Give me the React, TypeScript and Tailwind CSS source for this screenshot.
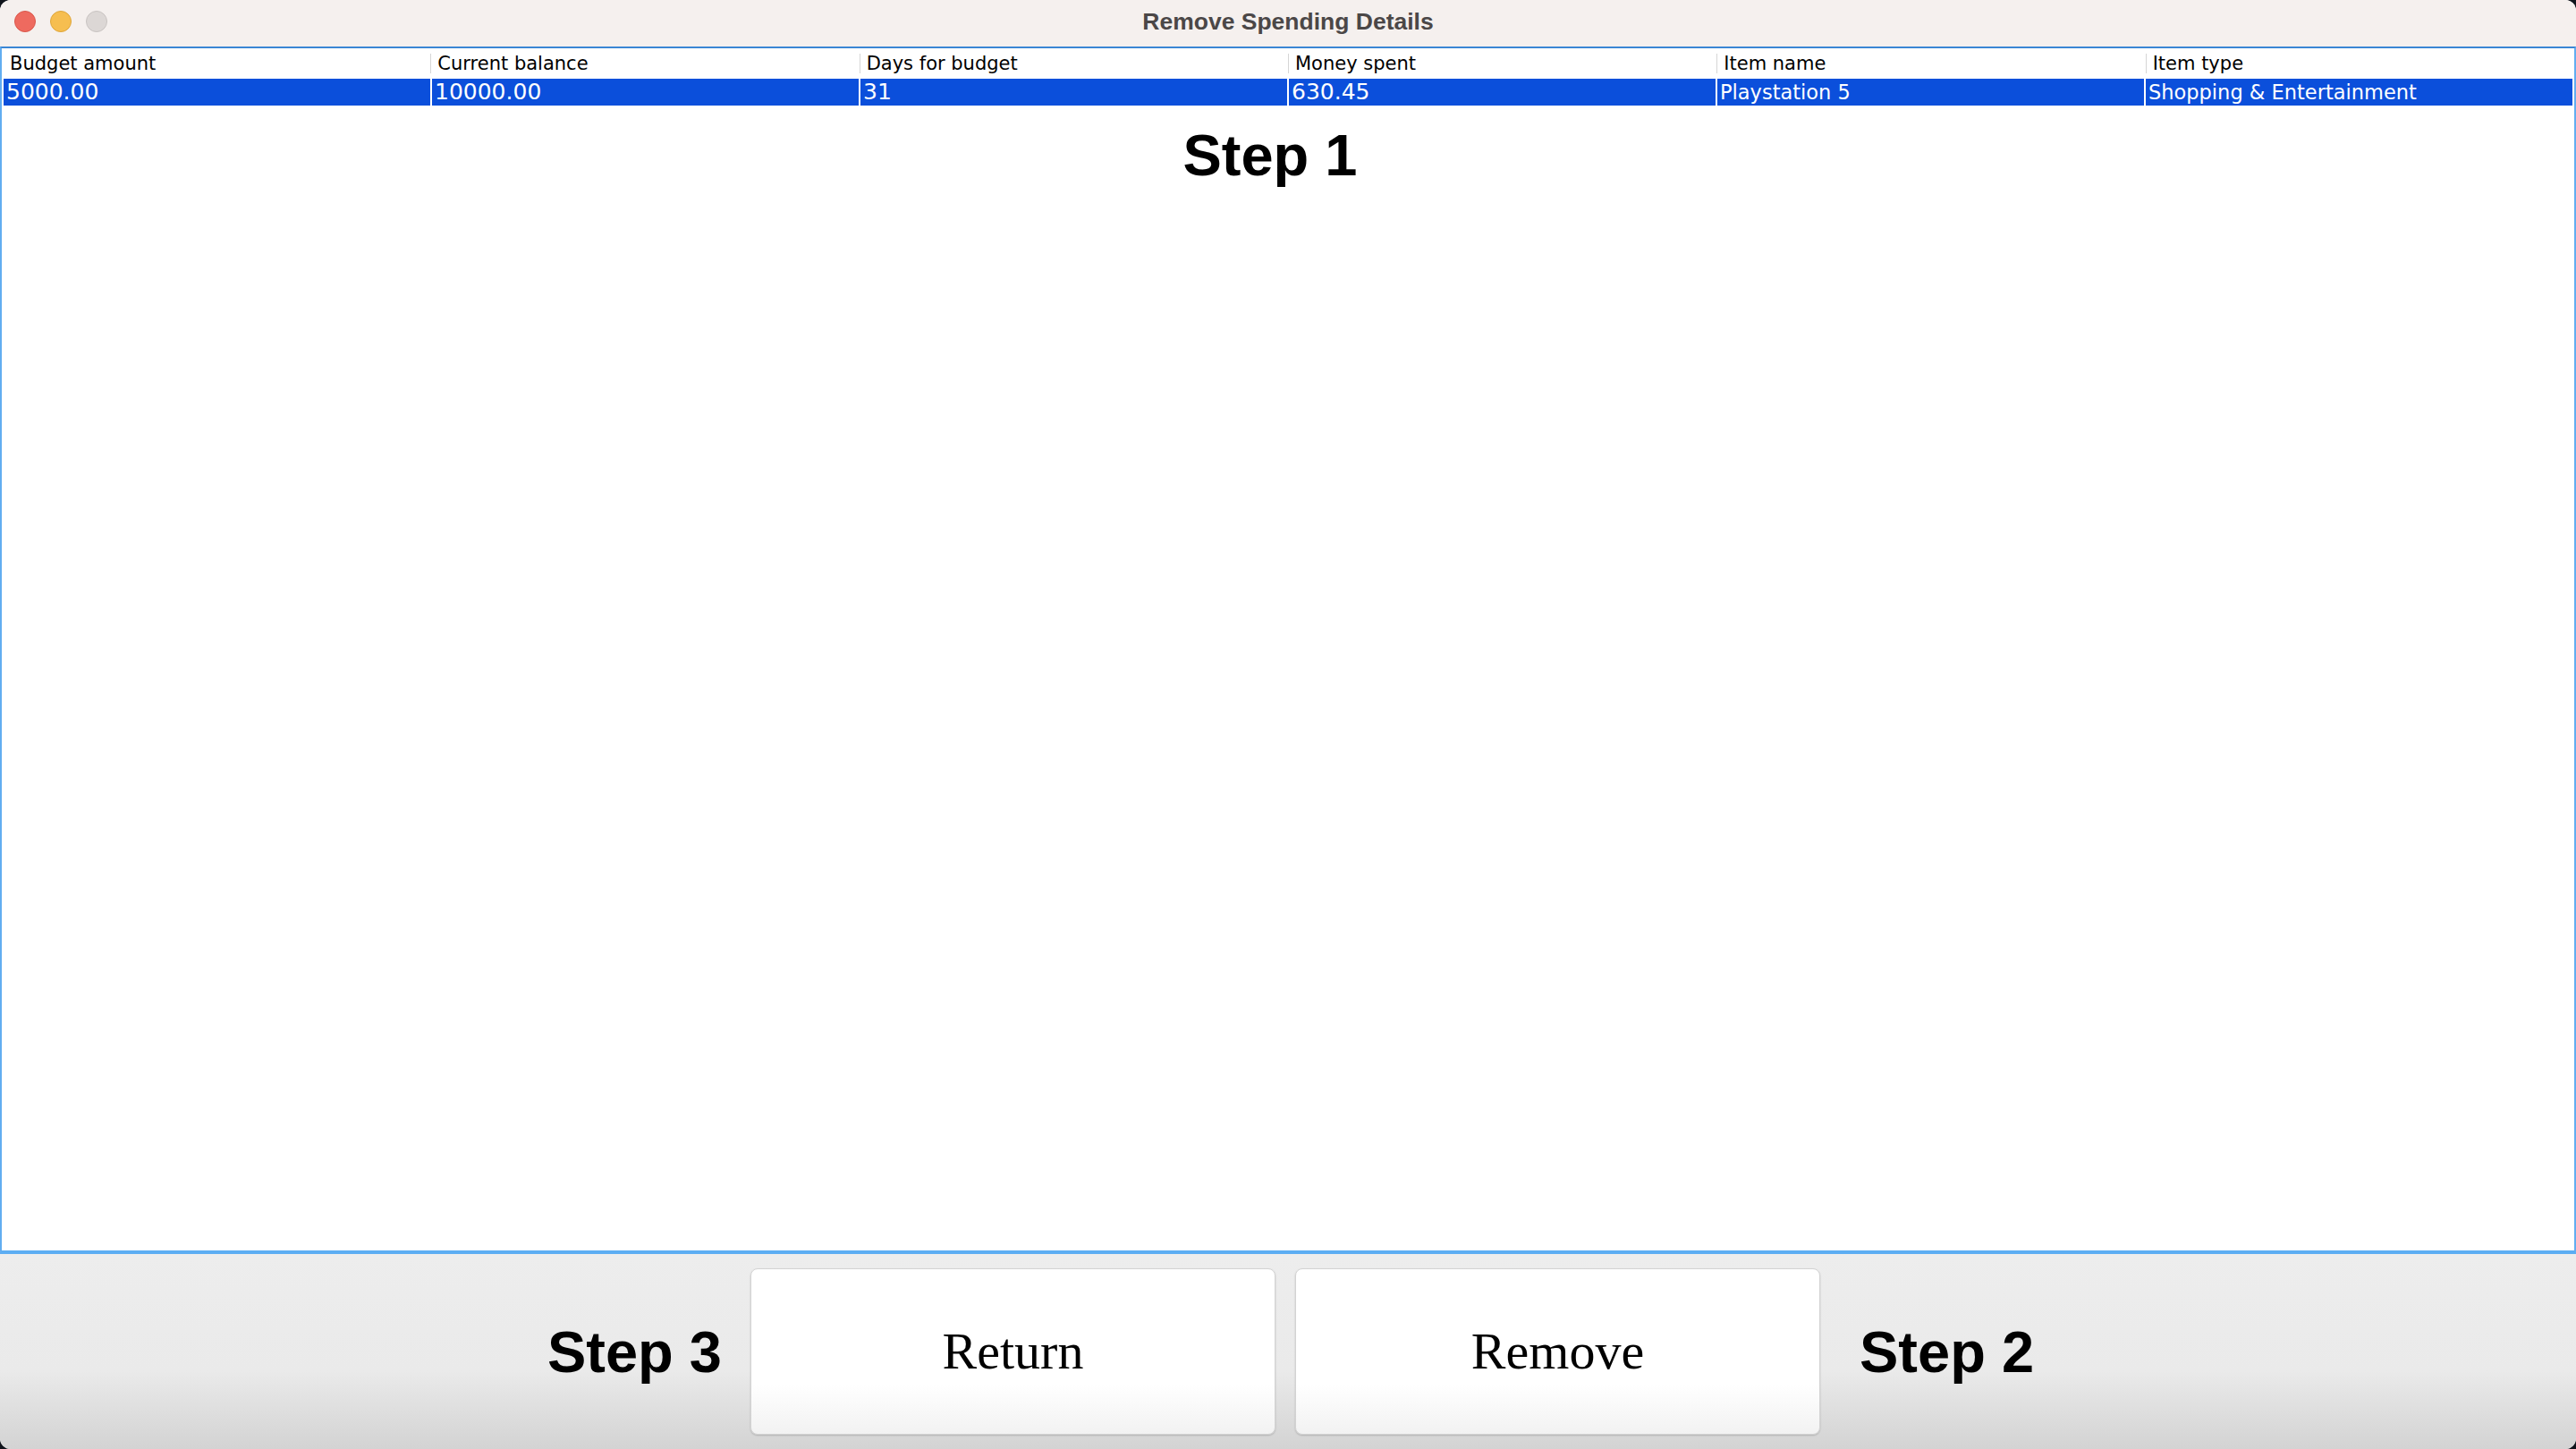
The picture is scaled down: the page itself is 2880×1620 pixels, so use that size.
import React from "react";

const columns = [
  "Budget amount",
  "Current balance",
  "Days for budget",
  "Money spent",
  "Item name",
  "Item type",
];

const rows = [
  ["5000.00", "10000.00", "31", "630.45", "Playstation 5", "Shopping & Entertainment"],
];

function TrafficLights() {
  return (
    <div className="flex items-center gap-[16px] pl-[16px]">
      <span className="w-[24px] h-[24px] rounded-full bg-[#ee6a5f] border border-[#d9574c]" />
      <span className="w-[24px] h-[24px] rounded-full bg-[#f6be50] border border-[#dea53a]" />
      <span className="w-[24px] h-[24px] rounded-full bg-[#dcd7d5] border border-[#c8c3c1]" />
    </div>
  );
}

function StepLabel({ children, className = "" }: { children: React.ReactNode; className?: string }) {
  return (
    <div
      className={`text-[65px] leading-none font-bold text-black whitespace-nowrap ${className}`}
      style={{ fontFamily: '"Liberation Sans", Arial, sans-serif' }}
    >
      {children}
    </div>
  );
}

function ActionButton({ label }: { label: string }) {
  return (
    <button
      className="w-[587px] h-[186px] rounded-[8px] border border-[#d3d3d3] bg-linear-to-b from-white via-white via-70% to-[#f2f2f2] shadow-[0_1px_2px_rgba(0,0,0,0.18)] flex items-center justify-center text-[58px] leading-none text-black"
      style={{ fontFamily: '"Liberation Serif", "Times New Roman", serif' }}
    >
      {label}
    </button>
  );
}

const isNumber = (v: string) => /^[\d.]+$/.test(v);

export default function App() {
  return (
    <div className="w-[2880px] h-[1620px] bg-[#10141c]">
      <div className="w-full h-full rounded-[12px] overflow-hidden flex flex-col bg-white">
        {/* Title bar */}
        <div className="h-[52px] shrink-0 bg-[#f5f0ee] grid grid-cols-[1fr_auto_1fr] items-center pb-[4px]">
          <TrafficLights />
          <div
            className="text-[26.5px] font-bold text-[#4b4747] leading-none"
            style={{ fontFamily: '"Liberation Sans", Arial, sans-serif' }}
          >
            Remove Spending Details
          </div>
          <div />
        </div>

        {/* Table area */}
        <div
          className="flex-1 flex flex-col bg-white border-x-2 border-t-2 border-b-4 border-x-[#62adf0] border-t-[#3a86d4] border-b-[#5cadf3]"
          style={{ fontFamily: '"DejaVu Sans", Verdana, sans-serif' }}
        >
          <div className="grid grid-cols-6 py-[6px]">
            {columns.map((c, i) => (
              <div
                key={c}
                className={
                  i === 0
                    ? "h-[22px] pl-[9px] text-[21px] leading-[22px] text-black whitespace-nowrap"
                    : "h-[22px] pl-[7px] border-l border-[#d6d6d6] text-[21px] leading-[22px] text-black whitespace-nowrap"
                }
              >
                {c}
              </div>
            ))}
          </div>
          {rows.map((r, ri) => (
            <div key={ri} className="grid grid-cols-6 gap-x-[2px] px-[2px]">
              {r.map((v, i) => (
                <div
                  key={i}
                  className={
                    isNumber(v)
                      ? "h-[30px] bg-[#0b4fdb] text-white text-[25px] leading-[30px] pl-[3px] whitespace-nowrap overflow-hidden"
                      : "h-[30px] bg-[#0b4fdb] text-white text-[22.5px] leading-[31px] pl-[3px] whitespace-nowrap overflow-hidden"
                  }
                >
                  {v}
                </div>
              ))}
            </div>
          ))}
          <div className="flex justify-center pr-[40px] mt-[23px]">
            <StepLabel>Step 1</StepLabel>
          </div>
        </div>

        {/* Bottom controls */}
        <div className="h-[218px] shrink-0 bg-linear-to-b from-[#ededed] via-[#eaeaea] via-60% to-[#d3d3d3] flex items-center justify-center pl-[6px]">
          <StepLabel className="mr-[32px]">Step 3</StepLabel>
          <div className="flex gap-[22px]">
            <ActionButton label="Return" />
            <ActionButton label="Remove" />
          </div>
          <StepLabel className="ml-[44px]">Step 2</StepLabel>
        </div>
      </div>
    </div>
  );
}
